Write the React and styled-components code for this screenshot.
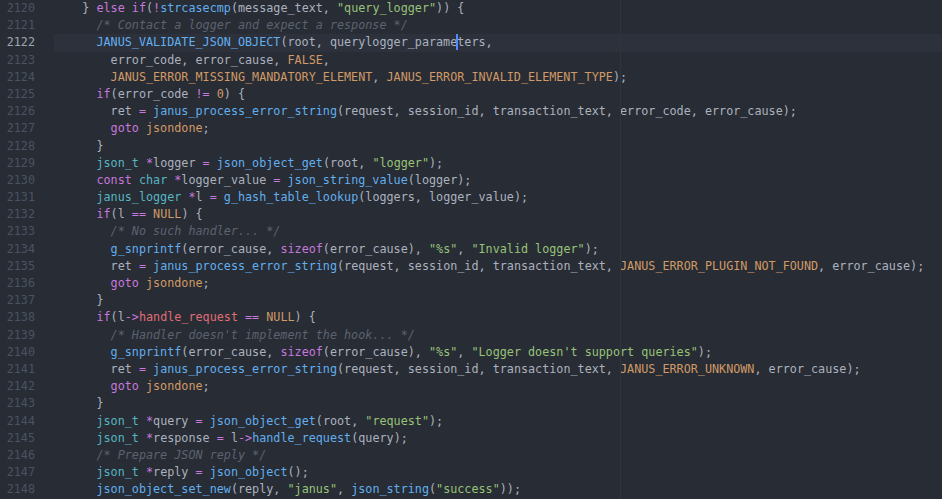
import React from "react";
import styled, { createGlobalStyle } from "styled-components";

const GlobalStyle = createGlobalStyle`
  html, body {
    margin: 0;
    padding: 0;
    background: #282c34;
  }
`;

const Editor = styled.div`
  position: relative;
  width: 942px;
  height: 499px;
  overflow: hidden;
  background: #282c34;
  font-family: "DejaVu Sans Mono", "Liberation Mono", monospace;
  font-size: 11.75px;
  line-height: 17.2px;
  color: #abb2bf;
`;

const WrapGuide = styled.div`
  position: absolute;
  top: 0;
  bottom: 0;
  left: 620px;
  width: 1px;
  background: #30343c;
  pointer-events: none;
`;

const Row = styled.div`
  display: grid;
  grid-template-columns: 54px 1fr;
  height: 17.2px;
`;

const LineNumber = styled.div`
  text-align: right;
  padding-right: 19px;
  color: ${(p) => (p.$active ? "#9ea5b2" : "#4b5263")};
`;

const Code = styled.div`
  white-space: pre;
  background: ${(p) => (p.$active ? "#2c313c" : "transparent")};
`;

const colors = {
  plain: "#abb2bf",
  comment: "#5c6370",
  string: "#98c379",
  keyword: "#c678dd",
  operator: "#c678dd",
  type: "#56b6c2",
  constant: "#d19a66",
  label: "#d19a66",
  func: "#61afef",
  member: "#e06c75",
};

const Token = styled.span`
  color: ${(p) => colors[p.$kind] || colors.plain};
  font-style: ${(p) => (p.$kind === "comment" ? "italic" : "normal")};
`;

const Cursor = styled.span`
  position: relative;
  &::after {
    content: "";
    position: absolute;
    left: -1px;
    top: -1px;
    width: 2px;
    height: 16px;
    background: #528bff;
  }
`;

const lines = [
  "    } else if(!strcasecmp(message_text, \"query_logger\")) {",
  "      /* Contact a logger and expect a response */",
  "      JANUS_VALIDATE_JSON_OBJECT(root, querylogger_parame|ters,",
  "        error_code, error_cause, FALSE,",
  "        JANUS_ERROR_MISSING_MANDATORY_ELEMENT, JANUS_ERROR_INVALID_ELEMENT_TYPE);",
  "      if(error_code != 0) {",
  "        ret = janus_process_error_string(request, session_id, transaction_text, error_code, error_cause);",
  "        goto jsondone;",
  "      }",
  "      json_t *logger = json_object_get(root, \"logger\");",
  "      const char *logger_value = json_string_value(logger);",
  "      janus_logger *l = g_hash_table_lookup(loggers, logger_value);",
  "      if(l == NULL) {",
  "        /* No such handler... */",
  "        g_snprintf(error_cause, sizeof(error_cause), \"%s\", \"Invalid logger\");",
  "        ret = janus_process_error_string(request, session_id, transaction_text, JANUS_ERROR_PLUGIN_NOT_FOUND, error_cause);",
  "        goto jsondone;",
  "      }",
  "      if(l->handle_request == NULL) {",
  "        /* Handler doesn't implement the hook... */",
  "        g_snprintf(error_cause, sizeof(error_cause), \"%s\", \"Logger doesn't support queries\");",
  "        ret = janus_process_error_string(request, session_id, transaction_text, JANUS_ERROR_UNKNOWN, error_cause);",
  "        goto jsondone;",
  "      }",
  "      json_t *query = json_object_get(root, \"request\");",
  "      json_t *response = l->handle_request(query);",
  "      /* Prepare JSON reply */",
  "      json_t *reply = json_object();",
  "      json_object_set_new(reply, \"janus\", json_string(\"success\"));",
];

// very small C highlighter, just enough for this snippet
const rules = [
  [/^\/\*.*?\*\//, "comment"],
  [/^"(?:[^"\\]|\\.)*"/, "string"],
  [/^(if|else|goto|const|sizeof)\b/, "keyword"],
  [/^(json_t|char|janus_logger)\b/, "type"],
  [/^[A-Za-z_]\w*(?=\()/, "func"],
  [/^(NULL|FALSE|[A-Z][A-Z0-9_]+)\b/, "constant"],
  [/^\d+/, "constant"],
  [/^(->|==|!=|=|!|\*)/, "operator"],
  [/^[A-Za-z_]\w*/, "ident"],
  [/^\|/, "cursor"],
  [/^[^A-Za-z_0-9"\/=!*|-]+|^./, "plain"],
];

const tokenize = (src) => {
  const out = [];
  let rest = src;
  while (rest.length) {
    for (const [re, kind] of rules) {
      const m = rest.match(re);
      if (!m) continue;
      let k = kind;
      const prev = out[out.length - 1];
      if (k === "ident") {
        if (prev && prev.text === "->") k = "member";
        else if (out.length >= 2 && out[out.length - 2].text === "goto") k = "label";
        else k = "plain";
      }
      out.push({ kind: k, text: m[0] });
      rest = rest.slice(m[0].length);
      break;
    }
  }
  return out;
};

const FIRST = 2120;
const ACTIVE = 2122;

const App = () => (
  <>
    <GlobalStyle />
    <Editor>
      {lines.map((line, i) => {
        const n = FIRST + i;
        const active = n === ACTIVE;
        return (
          <Row key={n}>
            <LineNumber $active={active}>{n}</LineNumber>
            <Code $active={active}>
              {tokenize(line).map((t, j) =>
                t.kind === "cursor" ? (
                  <Cursor key={j} />
                ) : (
                  <Token key={j} $kind={t.kind}>
                    {t.text}
                  </Token>
                )
              )}
            </Code>
          </Row>
        );
      })}
      <WrapGuide />
    </Editor>
  </>
);

export default App;
